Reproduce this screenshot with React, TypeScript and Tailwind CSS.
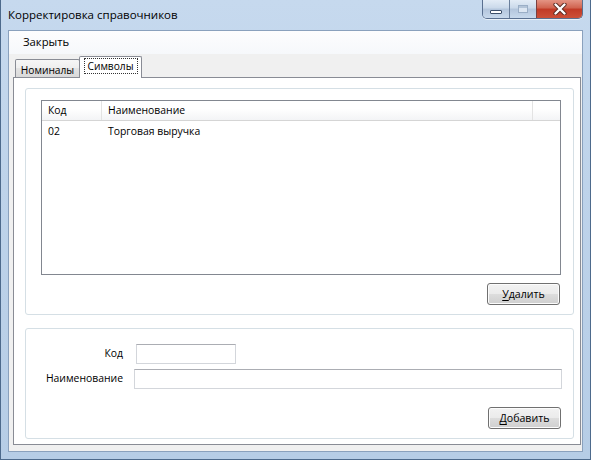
import React from "react";

const font = "font-['Open_Sans','Noto_Sans',sans-serif]";

function Btn({ first, rest }: { first: string; rest: string }) {
  return (
    <div className="w-[73px] h-[22px] rounded-[3px] border border-[#707070] bg-[linear-gradient(to_bottom,#f2f2f2_0%,#ebebeb_50%,#dddddd_50%,#cfcfcf_100%)] shadow-[inset_0_0_0_1px_#fcfcfc] flex items-center justify-center text-[10.6px] text-black leading-none">
      <span>
        <span className="underline underline-offset-2">{first}</span>
        {rest}
      </span>
    </div>
  );
}

function TitleButtons() {
  return (
    <div className="flex h-[19px] rounded-b-[5px] border border-t-0 border-[#5a7090] overflow-hidden shadow-[0_1px_0_#e8f0f8]">
      <div className="w-[27px] h-full bg-[linear-gradient(to_bottom,#e3ecf6_0%,#cad9ea_45%,#b3c5dc_50%,#c8d9ec_100%)] flex items-center justify-center border-r border-[#6a7f9c]">
        <div className="w-[12px] h-[4px] mt-[5px] bg-white border border-[#3c4f6a] rounded-[1px]" />
      </div>
      <div className="w-[27px] h-full bg-[linear-gradient(to_bottom,#e3ecf6_0%,#cad9ea_45%,#b3c5dc_50%,#c8d9ec_100%)] flex items-center justify-center border-r border-[#7a4040]">
        <div className="w-[10px] h-[8px] border border-[#9aaec6] bg-[#dce6f2] shadow-[inset_0_2px_0_#b3c4d8]" />
      </div>
      <div className="w-[45px] h-full bg-[linear-gradient(to_bottom,#e49484_0%,#d0624e_45%,#c13a26_50%,#cc5038_100%)] flex items-center justify-center">
        <svg width="16" height="12" viewBox="0 0 16 12">
          <path
            d="M3.5 1.5 L12.5 10.5 M12.5 1.5 L3.5 10.5"
            stroke="#5a2a22"
            strokeWidth="4.2"
            strokeLinecap="round"
          />
          <path
            d="M3.5 1.5 L12.5 10.5 M12.5 1.5 L3.5 10.5"
            stroke="#ffffff"
            strokeWidth="2.4"
            strokeLinecap="round"
          />
        </svg>
      </div>
    </div>
  );
}

export default function App() {
  return (
    <div
      className={`${font} w-[591px] h-[460px] overflow-hidden flex flex-col border border-t-0 border-[#4d6a8c] bg-[linear-gradient(to_bottom,#c6d9ee_0%,#bed3ea_40%,#b6cde6_100%)] text-black`}
    >
      {/* title bar */}
      <div className="h-[30px] flex items-start shrink-0">
        <div className="flex-1 pl-[7px] pt-[6px] text-[11.5px] leading-[17px] text-black">
          Корректировка справочников
        </div>
        <div className="mr-[7px]">
          <TitleButtons />
        </div>
      </div>

      <div className="flex flex-1">
        <div className="w-[7px] shrink-0" />
        {/* client area */}
        <div className="w-[575px] h-[422px] shrink-0 border border-[#8aa1bd] bg-[#f0f0f0] flex flex-col">
          {/* menu strip */}
          <div className="h-[23px] shrink-0 flex items-center pl-[14px] bg-[linear-gradient(to_bottom,#fdfdfe_0%,#f6f8fb_100%)] text-[11.3px]">
            <span>Закрыть</span>
          </div>

          {/* tab control */}
          <div className="flex flex-col pl-[4px] pt-[2px]">
            <div className="flex items-end h-[21px] pl-[2px]">
              <div className="w-[65px] h-[18px] border border-b-0 border-[#898c95] rounded-t-[2px] bg-[linear-gradient(to_bottom,#f6f6f6_0%,#eeeeee_50%,#e3e3e3_50%,#d9d9d9_100%)] text-[10.2px] leading-none flex items-center justify-center pt-[3px]">
                Номиналы
              </div>
              <div className="w-[63px] -ml-[1px] border border-b-0 border-[#898c95] rounded-t-[2px] bg-white text-[10.2px] flex items-start justify-center pt-[1px] relative z-10 -mb-[1px] h-[22px]">
                <span className="px-[3px] border border-dotted border-[#333] leading-[14px]">Символы</span>
              </div>
            </div>

            {/* tab page */}
            <div className="w-[568px] h-[368px] border border-[#898c95] bg-white pl-[11px] pt-[10px] flex flex-col">
              {/* group 1 */}
              <div className="w-[549px] h-[227px] rounded-[3px] border border-[#d5dfe5] shadow-[inset_0_0_0_1px_#ffffff] pl-[15px] pt-[11px] flex flex-col">
                <div className="w-[520px] h-[175px] border border-[#828790] bg-white flex flex-col">
                  <div className="h-[20px] flex text-[10.4px] bg-[linear-gradient(to_bottom,#ffffff_0%,#ffffff_40%,#f3f4f6_100%)] border-b border-[#d5d5d5]">
                    <div className="w-[60px] pl-[6px] pt-[1px] flex items-center border-r border-[#e3e3e3]">Код</div>
                    <div className="w-[431px] pl-[6px] pt-[1px] flex items-center border-r border-[#e3e3e3]">Наименование</div>
                    <div className="flex-1" />
                  </div>
                  <div className="flex h-[22px] text-[10.4px] items-center">
                    <div className="w-[60px] pl-[6px]">02</div>
                    <div className="pl-[6px]">Торговая выручка</div>
                  </div>
                </div>
                <div className="w-[520px] flex justify-end mt-[8px] pr-[1px]">
                  <Btn first="У" rest="далить" />
                </div>
              </div>

              {/* group 2 */}
              <div className="mt-[13px] w-[549px] h-[111px] rounded-[3px] border border-[#d5dfe5] shadow-[inset_0_0_0_1px_#ffffff] pt-[15px] flex flex-col text-[10.4px]">
                <div className="flex items-center h-[20px]">
                  <div className="w-[97px] text-right">Код</div>
                  <div className="ml-[13px] w-[100px] h-[20px] border border-[#d3d6db] border-t-[#abadb3] bg-white" />
                </div>
                <div className="flex items-center h-[20px] mt-[5px]">
                  <div className="w-[97px] text-right">Наименование</div>
                  <div className="ml-[11px] w-[428px] h-[20px] border border-[#d3d6db] border-t-[#abadb3] bg-white" />
                </div>
                <div className="flex justify-end w-[535px] mt-[18px]">
                  <Btn first="Д" rest="обавить" />
                </div>
              </div>
            </div>
          </div>
        </div>
        <div className="w-[7px] shrink-0" />
      </div>
      <div className="h-[7px] shrink-0" />
    </div>
  );
}
